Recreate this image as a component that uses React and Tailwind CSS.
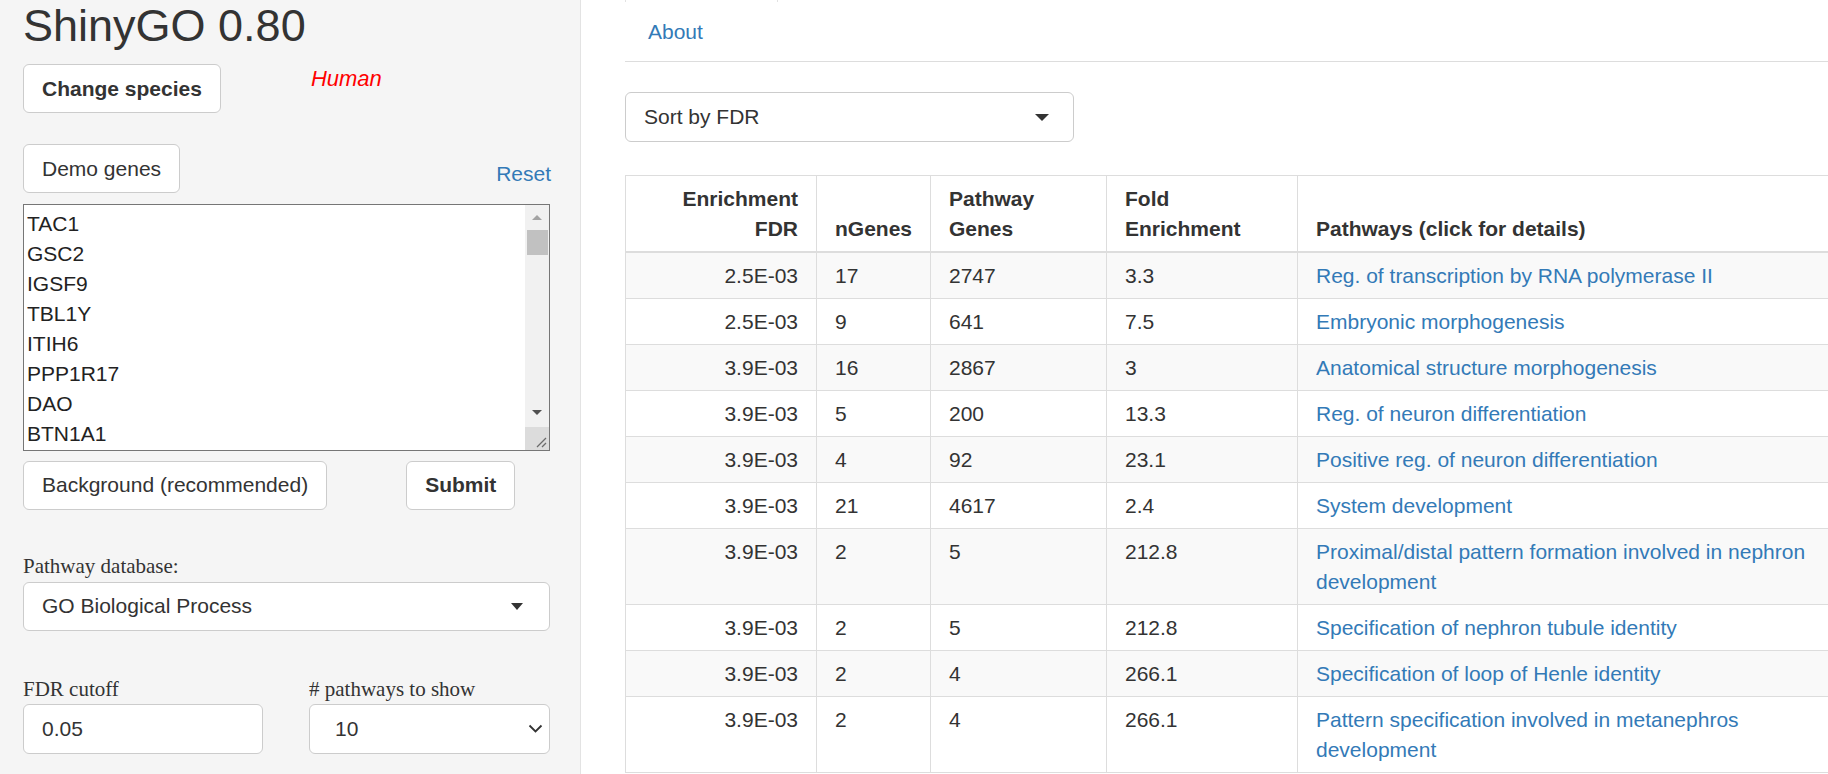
export default function App() {
  const genes = ["TAC1", "GSC2", "IGSF9", "TBL1Y", "ITIH6", "PPP1R17", "DAO", "BTN1A1"];
  const rows = [
    ["2.5E-03", "17", "2747", "3.3", "Reg. of transcription by RNA polymerase II"],
    ["2.5E-03", "9", "641", "7.5", "Embryonic morphogenesis"],
    ["3.9E-03", "16", "2867", "3", "Anatomical structure morphogenesis"],
    ["3.9E-03", "5", "200", "13.3", "Reg. of neuron differentiation"],
    ["3.9E-03", "4", "92", "23.1", "Positive reg. of neuron differentiation"],
    ["3.9E-03", "21", "4617", "2.4", "System development"],
    ["3.9E-03", "2", "5", "212.8", "Proximal/distal pattern formation involved in nephron development"],
    ["3.9E-03", "2", "5", "212.8", "Specification of nephron tubule identity"],
    ["3.9E-03", "2", "4", "266.1", "Specification of loop of Henle identity"],
    ["3.9E-03", "2", "4", "266.1", "Pattern specification involved in metanephros development"],
  ];

  const btn =
    "h-[49px] px-[18px] border border-[#cccccc] rounded-[6px] bg-white text-[#333333] text-[21px] leading-[30px] flex items-center whitespace-nowrap";

  return (
    <div className="w-[1828px] h-[774px] overflow-hidden flex bg-white text-[#333333] font-['Liberation_Sans',Arial,sans-serif] text-[21px] leading-[30px]">
      {/* Sidebar */}
      <aside className="w-[581px] shrink-0 bg-[#f5f5f5] border-r border-[#e3e3e3] pl-[23px]">
        <div className="w-[527px] flex flex-col">
          <h2 className="pt-[1px] text-[45px] leading-[49.5px] font-normal text-[#333333]">ShinyGO 0.80</h2>

          <div className="mt-[13.5px] flex items-start">
            <button className={btn + " font-bold"}>Change species</button>
            <span className="ml-[90px] text-[22px] leading-[30px] italic text-[#ff0000]">Human</span>
          </div>

          <div className="mt-[31px] flex items-end justify-between">
            <button className={btn}>Demo genes</button>
            <a className="mb-[4px] mr-[-1px] text-[#337ab7]">Reset</a>
          </div>

          {/* Textarea */}
          <div className="mt-[11px] h-[247px] border border-[#767676] bg-white flex overflow-hidden">
            <div className="flex-1 pl-[3px] pt-[4px] text-[#222222] overflow-hidden">
              {genes.map((g) => (
                <div key={g} className="leading-[30px]">{g}</div>
              ))}
            </div>
            <div className="w-[24px] flex flex-col bg-[#f1f1f1]">
              <div className="h-[25px] flex items-center justify-center">
                <div className="w-0 h-0 border-x-[5px] border-x-transparent border-b-[5px] border-b-[#a3a3a3]"></div>
              </div>
              <div className="h-[25px] ml-[2px] mr-[1px] bg-[#c1c1c1]"></div>
              <div className="flex-1"></div>
              <div className="h-[25px] flex items-center justify-center pb-[4px]">
                <div className="w-0 h-0 border-x-[5px] border-x-transparent border-t-[5px] border-t-[#505050]"></div>
              </div>
              <div className="h-[23px] bg-[#dcdcdc] flex items-end justify-end pr-[2px] pb-[2px]">
                <svg width="12" height="12" viewBox="0 0 12 12">
                  <line x1="2" y1="11" x2="11" y2="2" stroke="#6b6b6b" strokeWidth="1.3" />
                  <line x1="7" y1="11" x2="11" y2="7" stroke="#6b6b6b" strokeWidth="1.3" />
                </svg>
              </div>
            </div>
          </div>

          <div className="mt-[9.5px] flex items-start">
            <button className={btn}>Background (recommended)</button>
            <button className={btn + " ml-[79px] font-bold"}>Submit</button>
          </div>

          <label className="mt-[41px] font-['Liberation_Serif',serif] text-[21px] leading-[30px]">Pathway database:</label>
          <div className="mt-[1px] h-[49px] border border-[#cccccc] rounded-[6px] bg-white pl-[18px] pr-[26px] flex items-center justify-between">
            <span>GO Biological Process</span>
            <div className="w-0 h-0 border-x-[6px] border-x-transparent border-t-[7px] border-t-[#333333]"></div>
          </div>

          <div className="mt-[43.5px] flex">
            <div className="w-[240px] flex flex-col">
              <label className="font-['Liberation_Serif',serif] leading-[30px]">FDR cutoff</label>
              <div className="h-[50px] border border-[#cccccc] rounded-[6px] bg-white pl-[18px] flex items-center">0.05</div>
            </div>
            <div className="ml-[46px] w-[241px] flex flex-col">
              <label className="font-['Liberation_Serif',serif] leading-[30px]"># pathways to show</label>
              <div className="h-[50px] border border-[#cccccc] rounded-[6px] bg-white pl-[25px] pr-[6px] flex items-center justify-between">
                <span>10</span>
                <svg width="15" height="10" viewBox="0 0 15 10">
                  <polyline points="1.5,1.5 7.5,7.5 13.5,1.5" fill="none" stroke="#333333" strokeWidth="1.8" />
                </svg>
              </div>
            </div>
          </div>
        </div>
      </aside>

      {/* Main */}
      <main className="flex-1 min-w-0 overflow-hidden pl-[44px]">
        <div className="h-[2px] w-[153px] border-x border-[#e2e2e2]"></div>
        <nav className="flex border-b border-[#dddddd]">
          <a className="pt-[15px] pb-[14px] px-[23px] text-[#337ab7] leading-[30px]">About</a>
        </nav>

        <div className="mt-[30px] w-[449px] h-[50px] border border-[#cccccc] rounded-[6px] bg-white pl-[18px] pr-[24px] flex items-center justify-between">
          <span>Sort by FDR</span>
          <div className="w-0 h-0 border-x-[7px] border-x-transparent border-t-[7px] border-t-[#333333]"></div>
        </div>

        <table className="mt-[33px] w-[1237px] table-fixed border-collapse border border-[#dddddd] text-[21px] leading-[30px]">
          <colgroup>
            <col className="w-[191px]" />
            <col className="w-[114px]" />
            <col className="w-[176px]" />
            <col className="w-[191px]" />
            <col className="w-[565px]" />
          </colgroup>
          <thead>
            <tr>
              <th className="align-bottom text-right font-bold px-[18px] py-[7.5px] border border-[#dddddd] border-b-2">Enrichment<br />FDR</th>
              <th className="align-bottom text-left font-bold px-[18px] py-[7.5px] border border-[#dddddd] border-b-2">nGenes</th>
              <th className="align-bottom text-left font-bold px-[18px] py-[7.5px] border border-[#dddddd] border-b-2">Pathway<br />Genes</th>
              <th className="align-bottom text-left font-bold px-[18px] py-[7.5px] border border-[#dddddd] border-b-2">Fold<br />Enrichment</th>
              <th className="align-bottom text-left font-bold px-[18px] py-[7.5px] border border-[#dddddd] border-b-2">Pathways (click for details)</th>
            </tr>
          </thead>
          <tbody>
            {rows.map((r, i) => (
              <tr key={i} className={i % 2 === 0 ? "bg-[#f9f9f9]" : "bg-white"}>
                <td className="align-top text-right px-[18px] py-[7.5px] border border-[#dddddd]">{r[0]}</td>
                <td className="align-top px-[18px] py-[7.5px] border border-[#dddddd]">{r[1]}</td>
                <td className="align-top px-[18px] py-[7.5px] border border-[#dddddd]">{r[2]}</td>
                <td className="align-top px-[18px] py-[7.5px] border border-[#dddddd]">{r[3]}</td>
                <td className="align-top px-[18px] py-[7.5px] border border-[#dddddd]">
                  <a className="text-[#337ab7]">{r[4]}</a>
                </td>
              </tr>
            ))}
          </tbody>
        </table>
      </main>
    </div>
  );
}
